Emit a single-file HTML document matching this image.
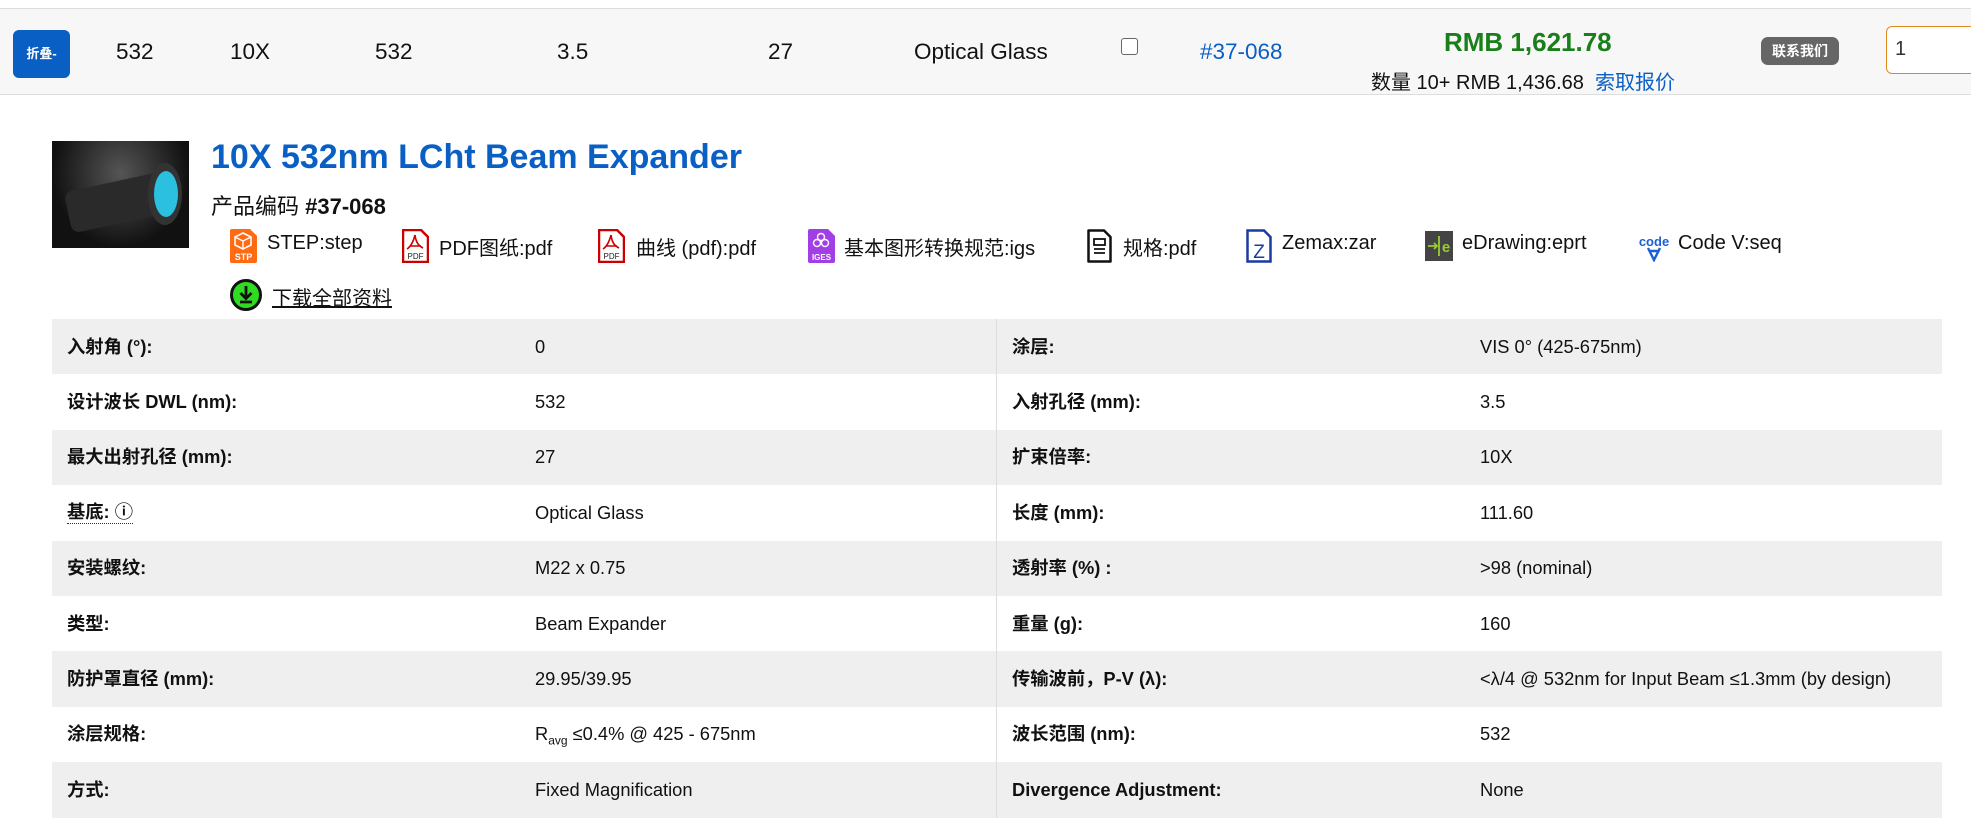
<!DOCTYPE html>
<html><head><meta charset="utf-8"><style>
*{margin:0;padding:0;box-sizing:border-box}
body{width:1971px;height:831px;background:#fff;font-family:"Liberation Sans","Noto Sans CJK SC",sans-serif;color:#111;position:relative;overflow:hidden}
.a{position:absolute;white-space:nowrap}
.bar{position:absolute;left:0;top:8px;width:1971px;height:87px;background:#f7f7f7;border-top:1px solid #ddd;border-bottom:1px solid #ddd}
.c{font-size:22.5px;top:39px}
.fl{font-size:20px;top:232px}
.ic{position:absolute;top:229px}
.tb{position:absolute;left:52px;top:319px;width:1890px;font-size:18.3px}
.r{display:flex;height:55.4px;align-items:center;line-height:22px}
.r:nth-child(odd){background:#efefef}
.r div{padding-left:15px;height:100%;display:flex;align-items:center}
.l{width:468px;font-weight:bold}
.v{width:477px;border-right:1px solid #ddd}
.l2{width:468px;font-weight:bold}
</style></head><body>
<div class="bar"></div>
<div class="a" style="left:13px;top:30px;width:57px;height:48px;background:#0a5fc4;border-radius:6px;color:#fff;font-size:13px;font-weight:bold;line-height:48px;text-align:center">折叠-</div>
<div class="a c" style="left:116px">532</div>
<div class="a c" style="left:230px">10X</div>
<div class="a c" style="left:375px">532</div>
<div class="a c" style="left:557px">3.5</div>
<div class="a c" style="left:768px">27</div>
<div class="a c" style="left:914px">Optical Glass</div>
<div class="a" style="left:1121px;top:38px;width:17px;height:17px;border:1.5px solid #666;border-radius:3px;background:#fff"></div>
<div class="a c" style="left:1200px;color:#0a5fc4">#37-068</div>
<div class="a" style="left:1444px;top:27px;font-size:26px;font-weight:bold;color:#1a7f1a">RMB 1,621.78</div>
<div class="a" style="left:1371px;top:66px;font-size:20px">数量 10+ RMB 1,436.68 &nbsp;<span style="color:#0a5fc4">索取报价</span></div>
<div class="a" style="left:1761px;top:37px;width:78px;height:28px;background:#666;border-radius:7px;color:#fff;font-size:14px;font-weight:bold;line-height:28px;text-align:center">联系我们</div>
<div class="a" style="left:1886px;top:26px;width:100px;height:48px;border:1.5px solid #e08a1e;border-radius:6px;background:#fff;font-size:20px;line-height:45px;padding-left:8px;color:#333">1</div>

<div class="a" style="left:52px;top:141px;width:137px;height:107px;background:radial-gradient(ellipse at 50% 30%,#555,#111 70%);overflow:hidden">
<div style="position:absolute;left:15px;top:40px;width:105px;height:42px;background:#2a2a2a;border-radius:8px;transform:rotate(-12deg)"></div>
<div style="position:absolute;left:96px;top:22px;width:34px;height:62px;background:#333;border-radius:50%"></div>
<div style="position:absolute;left:102px;top:30px;width:24px;height:46px;background:#2bc0e0;border-radius:50%"></div>
</div>
<div class="a" style="left:211px;top:138px;font-size:34px;font-weight:bold;color:#0a5fc4">10X 532nm LCht Beam Expander</div>
<div class="a" style="left:211px;top:189px;font-size:22px">产品编码 <b>#37-068</b></div>

<svg class="ic" style="left:230px" width="27" height="34" viewBox="0 0 27 34"><path d="M2 0H20L27 7V32Q27 34 25 34H2Q0 34 0 32V2Q0 0 2 0Z" fill="#ff6a13"/><path d="M13 4L21 8V16L13 20L5 16V8Z" fill="none" stroke="#fff" stroke-width="1.6"/><path d="M5 8L13 12L21 8M13 12V20" fill="none" stroke="#fff" stroke-width="1.4"/><text x="13.5" y="31" font-size="9" font-weight="bold" fill="#fff" text-anchor="middle" font-family="Liberation Sans">STP</text></svg>
<div class="a fl" style="left:267px">STEP:step</div>
<svg class="ic" style="left:402px" width="27" height="34" viewBox="0 0 27 34"><path d="M2 1H19L26 8V33H1V1Z" fill="#fff" stroke="#c00" stroke-width="2.5"/><path d="M13 6C11 14 8 18 5 20M13 6C14 14 17 17 21 19M8 17H19" fill="none" stroke="#c00" stroke-width="1.6"/><text x="13.5" y="30" font-size="8" fill="#222" text-anchor="middle" font-family="Liberation Sans">PDF</text></svg>
<div class="a fl" style="left:439px">PDF图纸:pdf</div>
<svg class="ic" style="left:598px" width="27" height="34" viewBox="0 0 27 34"><path d="M2 1H19L26 8V33H1V1Z" fill="#fff" stroke="#c00" stroke-width="2.5"/><path d="M13 6C11 14 8 18 5 20M13 6C14 14 17 17 21 19M8 17H19" fill="none" stroke="#c00" stroke-width="1.6"/><text x="13.5" y="30" font-size="8" fill="#222" text-anchor="middle" font-family="Liberation Sans">PDF</text></svg>
<div class="a fl" style="left:636px">曲线 (pdf):pdf</div>
<svg class="ic" style="left:808px" width="27" height="34" viewBox="0 0 27 34"><path d="M2 0H20L27 7V32Q27 34 25 34H2Q0 34 0 32V2Q0 0 2 0Z" fill="#a23ee6"/><circle cx="13" cy="8" r="3.5" fill="none" stroke="#fff" stroke-width="1.4"/><circle cx="9" cy="14" r="3.5" fill="none" stroke="#fff" stroke-width="1.4"/><circle cx="17" cy="14" r="3.5" fill="none" stroke="#fff" stroke-width="1.4"/><text x="13.5" y="31" font-size="8" font-weight="bold" fill="#fff" text-anchor="middle" font-family="Liberation Sans">IGES</text></svg>
<div class="a fl" style="left:844px">基本图形转换规范:igs</div>
<svg class="ic" style="left:1087px" width="25" height="34" viewBox="0 0 25 34"><path d="M2 1.5H17L23.5 8V32.5H1.5V1.5Z" fill="#fff" stroke="#111" stroke-width="2.5" stroke-linejoin="round"/><rect x="7" y="10" width="11" height="6" fill="none" stroke="#111" stroke-width="1.8"/><path d="M7 20H18M7 24H18" stroke="#111" stroke-width="1.8"/></svg>
<div class="a fl" style="left:1123px">规格:pdf</div>
<svg class="ic" style="left:1246px" width="26" height="34" viewBox="0 0 26 34"><path d="M2 1.5H18L24.5 8V32.5H1.5V1.5Z" fill="#fff" stroke="#1a3aa0" stroke-width="2.5"/><text x="13" y="29" font-size="19" fill="#1a3aa0" text-anchor="middle" font-family="Liberation Sans">Z</text></svg>
<div class="a fl" style="left:1282px">Zemax:zar</div>
<svg class="ic" style="left:1425px;top:231px" width="28" height="30" viewBox="0 0 28 30"><rect width="28" height="30" fill="#444"/><path d="M3 15H12M9 12L12 15L9 18M14 5V25" stroke="#9c3" stroke-width="1.8" fill="none"/><text x="21" y="21" font-size="15" font-weight="bold" fill="#9c3" text-anchor="middle" font-family="Liberation Sans">e</text></svg>
<div class="a fl" style="left:1462px">eDrawing:eprt</div>
<svg class="ic" style="left:1638px;top:232px" width="33" height="30" viewBox="0 0 33 30"><text x="16" y="14" font-size="13" font-weight="bold" fill="#1a5fd6" text-anchor="middle" font-family="Liberation Sans">code</text><path d="M10 16L16 28L22 16M12 19H20" stroke="#1a5fd6" stroke-width="2.4" fill="none"/></svg>
<div class="a fl" style="left:1678px">Code V:seq</div>

<svg class="a" style="left:230px;top:279px" width="32" height="32" viewBox="0 0 32 32"><circle cx="16" cy="16" r="14.5" fill="#2fdc22" stroke="#111" stroke-width="3"/><path d="M16 7V19M10.5 14L16 19.5L21.5 14M10 23H22" stroke="#111" stroke-width="2.8" fill="none"/></svg>
<div class="a" style="left:272px;top:282px;font-size:20px;text-decoration:underline">下载全部资料</div>

<div class="tb">
<div class="r"><div class="l">入射角 (°):</div><div class="v">0</div><div class="l2">涂层:</div><div>VIS 0° (425-675nm)</div></div>
<div class="r"><div class="l">设计波长 DWL (nm):</div><div class="v">532</div><div class="l2">入射孔径 (mm):</div><div>3.5</div></div>
<div class="r"><div class="l">最大出射孔径 (mm):</div><div class="v">27</div><div class="l2">扩束倍率:</div><div>10X</div></div>
<div class="r"><div class="l"><span style="border-bottom:1px dotted #333">基底: ⓘ</span></div><div class="v">Optical Glass</div><div class="l2">长度 (mm):</div><div>111.60</div></div>
<div class="r"><div class="l">安装螺纹:</div><div class="v">M22 x 0.75</div><div class="l2">透射率 (%) :</div><div>&gt;98 (nominal)</div></div>
<div class="r"><div class="l">类型:</div><div class="v">Beam Expander</div><div class="l2">重量 (g):</div><div>160</div></div>
<div class="r"><div class="l">防护罩直径 (mm):</div><div class="v">29.95/39.95</div><div class="l2">传输波前，P-V (λ):</div><div>&lt;λ/4 @ 532nm for Input Beam ≤1.3mm (by design)</div></div>
<div class="r"><div class="l">涂层规格:</div><div class="v"><span>R<sub style="font-size:12px;line-height:0">avg</sub> ≤0.4% @ 425 - 675nm</span></div><div class="l2">波长范围 (nm):</div><div>532</div></div>
<div class="r"><div class="l">方式:</div><div class="v">Fixed Magnification</div><div class="l2">Divergence Adjustment:</div><div>None</div></div>
</div>
</body></html>
